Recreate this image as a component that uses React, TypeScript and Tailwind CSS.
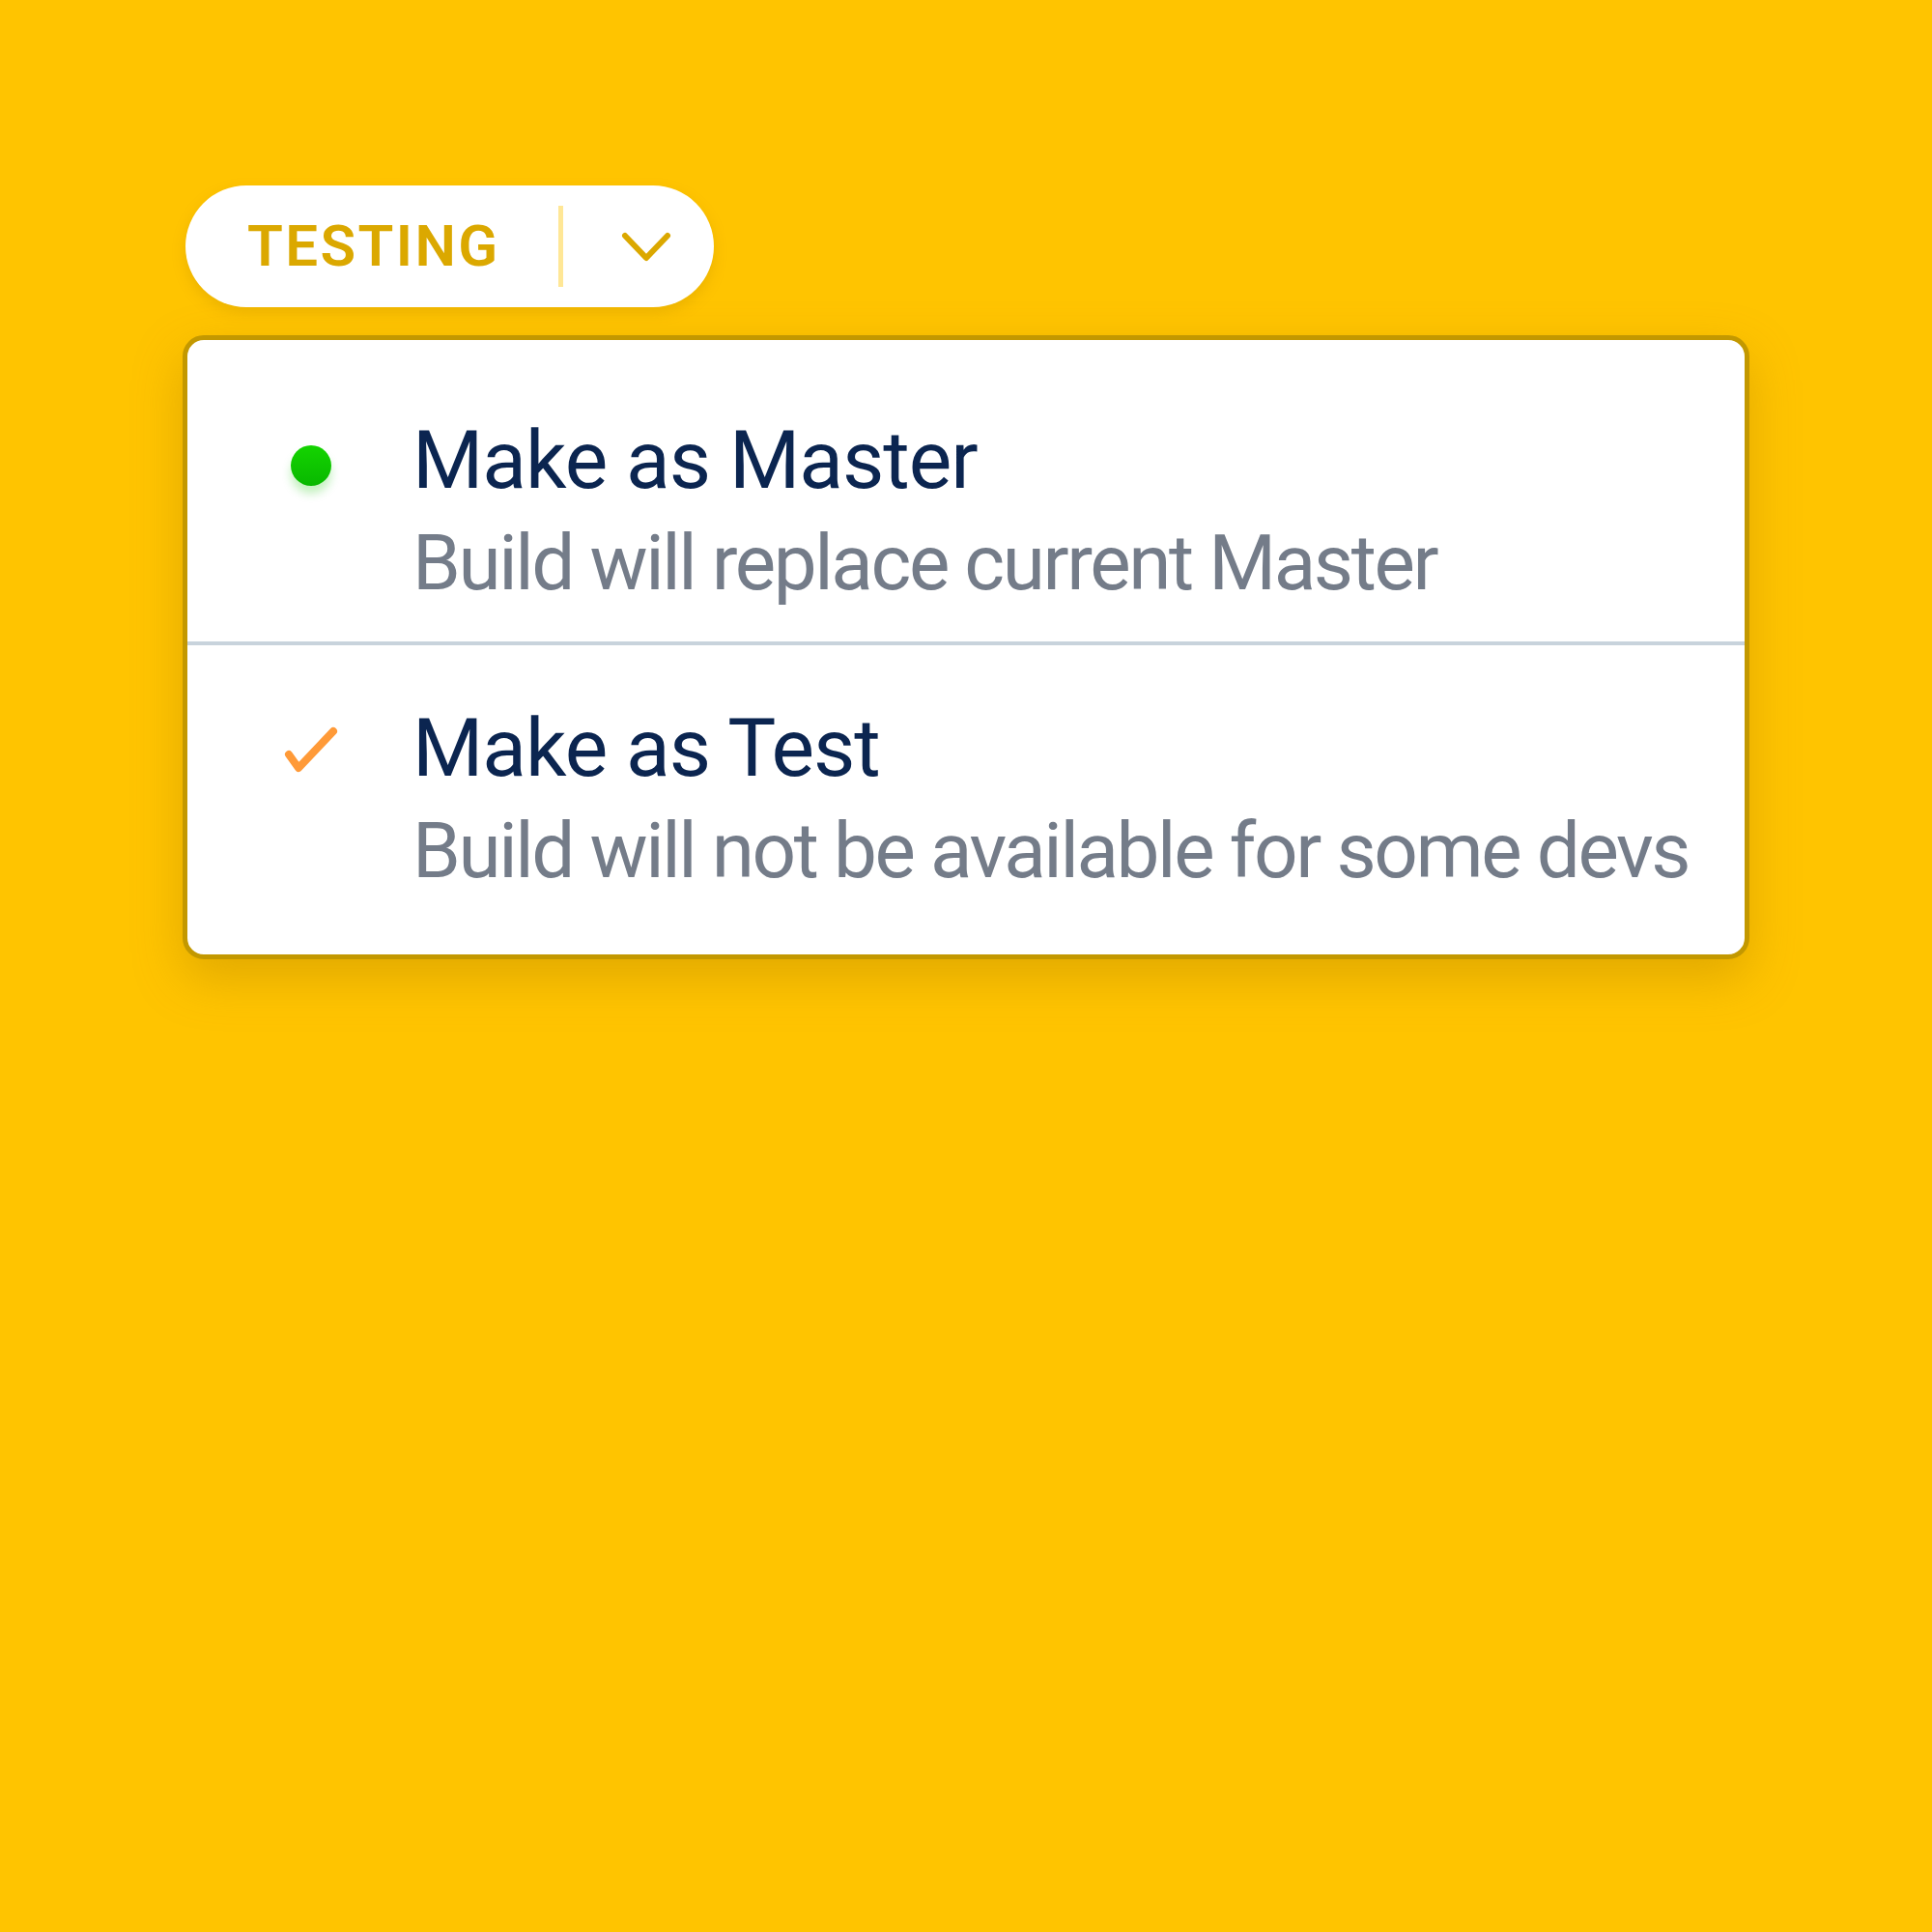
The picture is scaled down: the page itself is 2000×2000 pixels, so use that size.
import React from "react";

const font = { fontFamily: "Roboto, 'Noto Sans', sans-serif" };

function Chevron() {
  return (
    <svg width="56" height="40" viewBox="0 0 56 40" className="block">
      <path
        d="M6 6 L28 29 L50 6"
        fill="none"
        stroke="#dba800"
        strokeWidth="6"
        strokeLinecap="round"
        strokeLinejoin="round"
      />
    </svg>
  );
}

function Check() {
  return (
    <svg width="60" height="52" viewBox="0 0 60 52" className="block">
      <path
        d="M7 30 L17 44 L53 6"
        fill="none"
        stroke="#ff9a38"
        strokeWidth="8"
        strokeLinecap="round"
        strokeLinejoin="round"
      />
    </svg>
  );
}

interface OptionProps {
  icon: React.ReactNode;
  title: string;
  subtitle: string;
  className?: string;
}

function Option({ icon, title, subtitle, className }: OptionProps) {
  return (
    <div className={"flex " + (className ?? "")}>
      {/* Icon column */}
      <div className="w-[233px] flex-shrink-0 flex justify-center">{icon}</div>
      <div className="flex flex-col gap-[24px] whitespace-nowrap">
        <p className="text-[84px] leading-[1] tracking-[-0.012em] text-[#0b2550]">{title}</p>
        <p className="text-[80px] leading-[1] tracking-[-0.03em] text-[#747c89]">{subtitle}</p>
      </div>
    </div>
  );
}

export default function App() {
  return (
    <div className="w-[2000px] h-[2000px] bg-[#ffc400] pt-[192px] pl-[189px]" style={font}>
      {/* Status pill */}
      <div className="ml-[3px] h-[126px] w-[547px] rounded-full bg-white flex items-center shadow-[0_6px_14px_rgba(180,130,0,0.25)]">
        <span className="pl-[64px] text-[60px] leading-[1] font-semibold tracking-[0.04em] text-[#dba800]">
          TESTING
        </span>
        <div className="ml-auto w-[5px] h-[84px] bg-[#ffe796]" />
        <div className="ml-[58px] mr-[42px] mt-[6px]">
          <Chevron />
        </div>
      </div>

      {/* Dropdown menu */}
      <div className="mt-[29px] w-[1622px] rounded-[22px] border-[5px] border-[#c39800] bg-white shadow-[0_20px_50px_rgba(170,120,0,0.35)] overflow-hidden">
        <Option
          className="pt-[83px] pb-[41px]"
          icon={
            <div className="mt-[26px] ml-[22px] w-[42px] h-[42px] rounded-full bg-gradient-to-b from-[#14d400] to-[#08b800] shadow-[0_8px_10px_rgba(20,200,0,0.25)]" />
          }
          title="Make as Master"
          subtitle="Build will replace current Master"
        />
        <div className="h-[4px] bg-[#c8d3dc]" />
        <Option
          className="pt-[65px] pb-[67px]"
          icon={
            <div className="mt-[18px] ml-[22px]">
              <Check />
            </div>
          }
          title="Make as Test"
          subtitle="Build will not be available for some devs"
        />
      </div>
    </div>
  );
}
